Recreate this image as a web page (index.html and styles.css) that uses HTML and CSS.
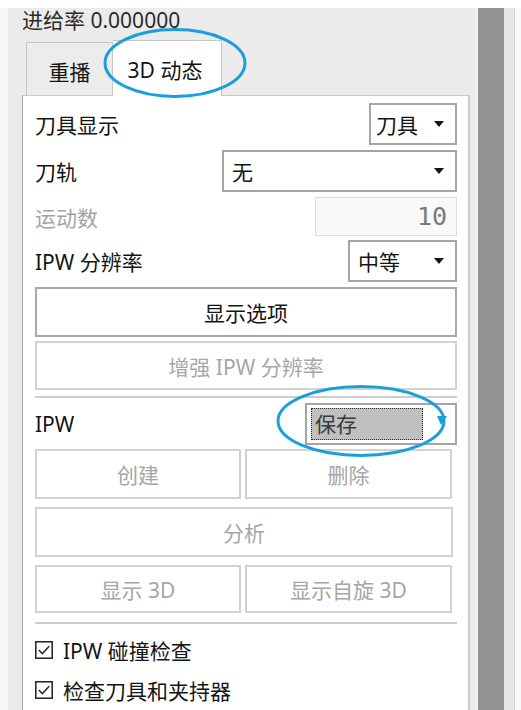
FILE: index.html
```html
<!DOCTYPE html>
<html lang="zh-CN">
<head>
<meta charset="utf-8">
<title>3D 动态</title>
<link rel="stylesheet" href="styles.css">
</head>
<body>
<div class="app">
  <div class="gutter"></div>
  <div class="main">
    <div class="feed">进给率 0.000000</div>
    <div class="tabs">
      <div class="tab">重播</div>
      <div class="tab active">3D 动态</div>
    </div>
    <div class="panel">
      <div class="row r1">
        <span class="label">刀具显示</span>
        <div class="select w88"><span>刀具</span><i class="arrow"></i></div>
      </div>
      <div class="row r2">
        <span class="label">刀轨</span>
        <div class="select w235"><span>无</span><i class="arrow"></i></div>
      </div>
      <div class="row r3">
        <span class="label dim">运动数</span>
        <div class="input">10</div>
      </div>
      <div class="row r4">
        <span class="label">IPW 分辨率</span>
        <div class="select w109"><span>中等</span><i class="arrow"></i></div>
      </div>
      <div class="btn b-opts">显示选项</div>
      <div class="btn off b-enh">增强 IPW 分辨率</div>
      <div class="sep s1"></div>
      <div class="row r5">
        <span class="label">IPW</span>
        <div class="select w152 save"><span class="hl">保存</span></div>
      </div>
      <div class="pair p1">
        <div class="btn off">创建</div>
        <div class="btn off">删除</div>
      </div>
      <div class="btn off b-ana">分析</div>
      <div class="pair p2">
        <div class="btn off">显示 3D</div>
        <div class="btn off">显示自旋 3D</div>
      </div>
      <div class="sep s2"></div>
      <div class="check c1">
        <svg class="box" viewBox="0 0 18 18" width="18" height="18"><rect x="0.8" y="0.8" width="16.4" height="16.4" fill="#fff" stroke="#2a2a2a" stroke-width="1.6"/><path d="M3.8 9 L7.4 12.6 L14.2 5.2" fill="none" stroke="#2a2a2a" stroke-width="1.6"/></svg>
        <span>IPW 碰撞检查</span>
      </div>
      <div class="check c2">
        <svg class="box" viewBox="0 0 18 18" width="18" height="18"><rect x="0.8" y="0.8" width="16.4" height="16.4" fill="#fff" stroke="#2a2a2a" stroke-width="1.6"/><path d="M3.8 9 L7.4 12.6 L14.2 5.2" fill="none" stroke="#2a2a2a" stroke-width="1.6"/></svg>
        <span>检查刀具和夹持器</span>
      </div>
    </div>
  </div>
  <div class="scroll">
    <div class="s-a"></div>
    <div class="s-b"></div>
    <div class="s-c"></div>
    <div class="s-d"></div>
    <div class="s-e"></div>
  </div>
  <svg class="ring ring-tab" viewBox="0 0 146 72" width="146" height="72">
    <ellipse cx="73" cy="36" rx="70" ry="33.5" fill="none" stroke="#1a9fdb" stroke-width="3"/>
  </svg>
  <svg class="ring ring-save" viewBox="0 0 180 76" width="180" height="76">
    <ellipse cx="86" cy="37" rx="83" ry="34.5" fill="none" stroke="#1a9fdb" stroke-width="3"/>
    <polygon points="162,32 172,32 166,41" fill="#1a9fdb"/>
  </svg>
</div>
</body>
</html>
```

FILE: styles.css
```css
* { box-sizing: border-box; }
html, body { margin: 0; padding: 0; }
body {
  background: #ffffff;
  font-family: "Noto Sans", "Noto Sans CJK SC", sans-serif;
  color: #141414;
}
.app {
  position: relative;
  width: 521px;
  height: 710px;
  padding-top: 8px;
  display: flex;
  overflow: hidden;
  background: #ffffff;
}
.gutter { width: 8px; flex: none; background: #f7f7f7; }
.main {
  width: 468px;
  flex: none;
  background: #ebebeb;
  padding: 0 6px 0 14px;
  display: flex;
  flex-direction: column;
}
.feed {
  height: 32px;
  padding-bottom: 8px;
  font-size: 21px;
  line-height: 24px;
  color: #2a2a2a;
  white-space: nowrap;
}
.tabs {
  height: 55px;
  display: flex;
  align-items: flex-end;
  padding-left: 4px;
  position: relative;
  z-index: 2;
}
.tab {
  width: 87px;
  height: 53px;
  border: 1px solid #c6c6c6;
  border-bottom: none;
  background: #ececec;
  font-size: 21px;
  display: flex;
  align-items: center;
  justify-content: center;
  padding-top: 4px;
  color: #141414;
}
.tab.active {
  width: 109px;
  height: 56px;
  margin-bottom: -1px;
  background: #ffffff;
  border-left: none;
  padding-top: 0;
  padding-right: 4px;
}
.panel {
  flex: 1;
  background: #ffffff;
  border-left: 1px solid #a3a3a3;
  border-top: 1px solid #c8c8c8;
  border-right: 2px solid #c8c8c8;
  padding: 7px 11px 0 12px;
  display: flex;
  flex-direction: column;
}
.row {
  height: 42px;
  display: flex;
  align-items: center;
  justify-content: space-between;
  flex: none;
}
.r2 { margin-top: 5px; }
.r3 { margin-top: 5px; height: 39px; }
.r4 { margin-top: 4px; }
.r5 { margin-top: 5px; }
.label { font-size: 21px; white-space: nowrap; }
.label.dim { color: #a3a3a3; }
.select {
  height: 42px;
  border: 2px solid #a5a5a5;
  background: #ffffff;
  display: flex;
  align-items: center;
  justify-content: space-between;
  padding: 0 11px 0 8px;
  font-size: 21px;
}
.w88 { width: 88px; padding-left: 5px; }
.w235 { width: 235px; }
.w109 { width: 109px; }
.w152 { width: 152px; }
.arrow {
  width: 0;
  height: 0;
  border-left: 5px solid transparent;
  border-right: 5px solid transparent;
  border-top: 6px solid #141414;
}
.save {
  align-items: flex-start;
  padding: 3px 0 0 4px;
}
.hl {
  width: 112px;
  height: 32px;
  background: #c0c0c0;
  border: 1px dotted #2a2a2a;
  font-size: 21px;
  line-height: 30px;
  padding-left: 3px;
  color: #3a3a3a;
}
.input {
  width: 142px;
  height: 39px;
  border: 1px solid #dcdcdc;
  background: #f9f9f9;
  font-family: "DejaVu Sans Mono", "Liberation Mono", monospace;
  font-size: 25px;
  color: #7a7a7a;
  text-align: right;
  line-height: 37px;
  padding-right: 9px;
}
.btn {
  flex: none;
  border: 2px solid #a8a8a8;
  background: #ffffff;
  display: flex;
  align-items: center;
  justify-content: center;
  font-size: 21px;
  color: #141414;
}
.btn.off {
  border: 2px solid #d2d2d2;
  color: #a6a6a6;
}
.b-opts { height: 50px; margin-top: 5px; }
.b-enh { height: 49px; margin-top: 4px; }
.sep {
  height: 2px;
  background: #cccccc;
  flex: none;
}
.s1 { margin-top: 6px; }
.s2 { margin-top: 9px; }
.pair {
  display: grid;
  grid-template-columns: 206px 207px;
  gap: 4px;
  flex: none;
}
.p1 { margin-top: 4px; height: 50px; }
.p2 { margin-top: 8px; height: 48px; }
.b-ana { height: 50px; margin-top: 8px; margin-right: 4px; }
.check {
  height: 40px;
  display: flex;
  align-items: center;
  gap: 10px;
  font-size: 21px;
  flex: none;
}
.c1 { margin-top: 6px; }
.box { flex: none; }
.scroll { flex: 1; display: flex; }
.s-a { width: 2px; background: #f3f3f3; }
.s-b { width: 26px; background: #939393; }
.s-c { width: 10px; background: #e7e7e7; }
.s-d { width: 1px; background: #d2d2d2; }
.s-e { flex: 1; background: #f8f8f8; }
.ring { position: absolute; pointer-events: none; z-index: 5; }
.ring-tab { left: 102px; top: 27px; }
.ring-save { left: 275px; top: 384px; }
```
